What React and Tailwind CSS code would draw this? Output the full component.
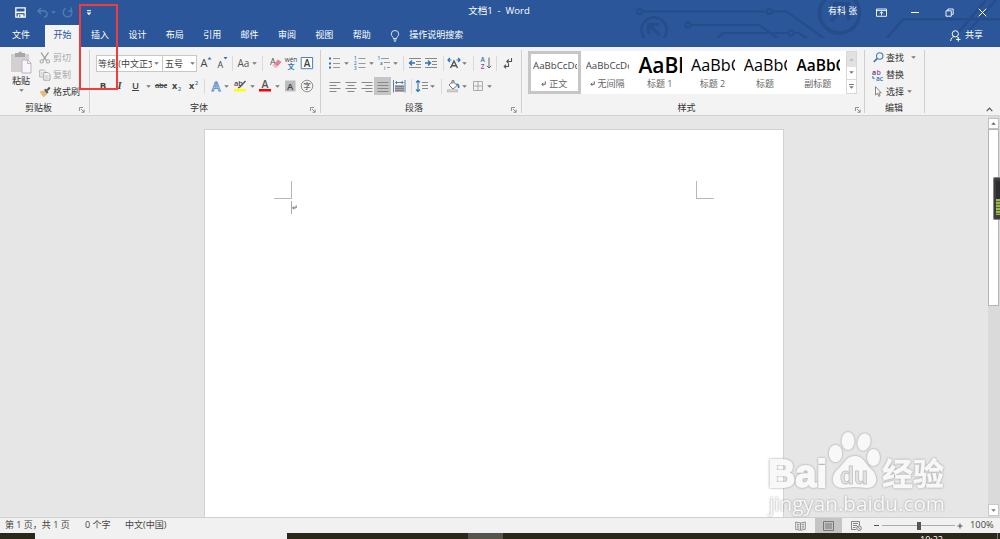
import React from 'react';

const tabs = ['插入', '设计', '布局', '引用', '邮件', '审阅', '视图', '帮助'];

const styleCards = [
    { name: '无间隔', mark: true, sample: 'AaBbCcDc', look: 'text-[9.7px] text-[#444]' },
    { name: '标题 1', sample: 'AaBb', look: 'text-[21px] font-semibold text-black' },
    { name: '标题 2', sample: 'AaBbC', look: 'text-[16.2px] text-black' },
    { name: '标题', sample: 'AaBbC', look: 'text-[16.2px] text-black' },
    { name: '副标题', sample: 'AaBbC', look: 'text-[15.5px] font-semibold text-black' },
];

/* Centers one tool in its slot of the ribbon row */
const Slot = ({ className, children }) => (
    <div className={`flex h-full shrink-0 items-center justify-center whitespace-nowrap ${className}`}>{children}</div>
);

const Caret = ({ className = 'text-[#777]' }) => (
    <svg className={`h-[3px] w-[5px] shrink-0 ${className}`} viewBox="0 0 5 3">
        <path d="M0.2 0.2h4.6L2.5 2.8z" fill="currentColor" />
    </svg>
);

const Sep = () => <span className="h-[15px] w-px shrink-0 bg-[#dadada]" />;

const Icon = ({ children, className = 'h-[14px] w-[14px]', box = '0 0 14 14' }) => (
    <svg className={`shrink-0 overflow-visible ${className}`} viewBox={box} fill="none">
        {children}
    </svg>
);

const Launcher = () => (
    <Icon className="h-[6px] w-[6px]" box="0 0 6 6">
        <path d="M0.5 4V0.5H4M2 2l3 3M5.2 2.6v2.7H2.5" stroke="#777" strokeWidth="0.8" />
    </Icon>
);

/* Group caption with the optional dialog launcher in its right corner */
const Caption = ({ children, launcher = true }) => (
    <div className="grid h-[12px] grid-cols-[1fr_10px] items-center">
        <span className="text-center leading-none text-[#333]">{children}</span>
        <span className="pt-[5px]">{launcher && <Launcher />}</span>
    </div>
);

const Lines = ({ d }) => (
    <Icon>
        <path d={d} stroke="#888" strokeWidth="1" />
    </Icon>
);

const TitleBar = () => (
    <div className="relative flex h-[25px] items-center text-white">
        <div className="flex w-[399px] items-center pl-[15px]">
            <Icon className="h-[11px] w-[11px]" box="0 0 11 11">
                <path d="M0.8 0.8h9.4v9.4H0.8z" stroke="#fff" strokeWidth="1.3" />
                <path d="M1 5.3h9" stroke="#fff" strokeWidth="1.6" />
                <path d="M2.7 7.3h5.8V10H2.7z" fill="#fff" />
                <path d="M4 8.2h1.4v1.6H4z" fill="#2b579a" />
            </Icon>
            <Icon className="ml-[11px] h-[11px] w-[11px]" box="0 0 11 11">
                <path d="M4 1L1 4l3 3M1 4h5.5c5 0 4.5 6 0.5 6" stroke="#557bb5" strokeWidth="1.4" />
            </Icon>
            <Caret className="ml-[3px] text-[#557bb5]" />
            <Icon className="ml-[6px] h-[11px] w-[11px]" box="0 0 11 11">
                <path d="M3.8 1.4A4.4 4.4 0 1 0 8.6 2.3M6 4.2h3.3V0.6" stroke="#557bb5" strokeWidth="1.3" />
            </Icon>
            <Icon className="ml-[13px] h-[6px] w-[6px]" box="0 0 6 6">
                <path d="M1 0.7h4" stroke="#fff" strokeWidth="1" />
                <path d="M0.6 2.4h4.8L3 5.2z" fill="#fff" />
            </Icon>
        </div>
        <div className="w-[200px] pb-[4px] text-center text-[9.5px] leading-none">文档1&nbsp; -&nbsp; Word</div>
        <div className="flex flex-1 items-center pl-[229px]">
            <span className="w-[48px] pb-[4px] leading-none">有科 张</span>
            <Icon className="h-[9px] w-[11px]" box="0 0 11 9">
                <path d="M0.5 1h10v7.3H0.5zM0.5 2.6h10M5.5 7.5V4M3.7 5.5l1.8-1.7 1.8 1.7" stroke="#fff" strokeWidth="0.9" />
            </Icon>
            <span className="ml-[24px] h-px w-[8px] bg-white" />
            <Icon className="ml-[26px] h-[9px] w-[9px]" box="0 0 9 9">
                <path d="M1 2.8h5.3v5.4H1zM2.8 2.8V1h5.4v5.3H6.4" stroke="#fff" strokeWidth="0.9" />
            </Icon>
            <Icon className="ml-[24px] h-[9px] w-[9px]" box="0 0 9 9">
                <path d="M0.7 0.7l7.6 7.6M8.3 0.7L0.7 8.3" stroke="#fff" strokeWidth="1" />
            </Icon>
        </div>
    </div>
);

const TabBar = () => (
    <div className="relative flex h-[22px] items-center text-white">
        <span className="w-[45px] pb-[3px] pl-[12px] leading-none">文件</span>
        <span className="flex h-full w-[35px] items-center justify-center bg-[#f3f3f3] pb-[2px] text-[#2b579a]">开始</span>
        {tabs.map((tab) => (
            <span key={tab} className="w-[37.4px] pb-[3px] pl-[11px] leading-none">{tab}</span>
        ))}
        <Icon className="ml-[11px] h-[12px] w-[10px]" box="0 0 11 13">
            <path d="M3.7 9.3C3.7 7.2 1.4 6.7 1.4 4.5a4.1 4.1 0 0 1 8.2 0C9.6 6.7 7.3 7.2 7.3 9.3zM3.8 10.8h3.4M4.4 12.2h2.2" stroke="#fff" strokeWidth="0.9" />
        </Icon>
        <span className="ml-[9px] pb-[3px] leading-none">操作说明搜索</span>
        <Icon className="mr-[4px] ml-auto h-[12px] w-[11px]" box="0 0 11 12">
            <circle cx="5.3" cy="3.8" r="3.1" stroke="#fff" strokeWidth="1" />
            <path d="M0.7 11c0.2-2.6 1.4-4 3.2-4.4M6.6 6.7l1 0.8M8.3 7.2v4.4M6.1 9.4h4.4" stroke="#fff" strokeWidth="1" />
        </Icon>
        <span className="mr-[17px] pb-[3px] leading-none">共享</span>
    </div>
);

/* Circuit-board theme art behind the title bar */
const Circuit = () => (
    <svg className="absolute top-0 left-[620px] h-[38px] w-[380px]" viewBox="0 0 380 38" fill="none" stroke="#264d8a" strokeWidth="2.2">
        <circle cx="19.5" cy="11.5" r="2.6" />
        <circle cx="149.5" cy="11.5" r="2.6" />
        <path d="M22 11.5h125M152 11.5h15l37 27" />
        <circle cx="68" cy="25" r="2.6" />
        <path d="M71 25h68.5l18 13.5" />
        <path d="M97 38l6-5h65M174 33h5l8 5.5" />
        <circle cx="171" cy="33" r="2.6" />
        <path d="M24.5 38A12.6 12.6 0 1 1 43.8 38" strokeWidth="2.7" />
        <path d="M28.5 34V24.500h10.500M29 25L39.5 35" strokeWidth="3.3" />
        <circle cx="219.5" cy="13" r="20" strokeWidth="3.6" />
        <path d="M213 4h15.500v16M228 4.500L211 21" strokeWidth="3.8" />
        <path d="M267 38l16-18.700h97M366 0l-30 35M376 0l-31 35" strokeWidth="2.500" />
    </svg>
);

const ClipboardGroup = () => (
    <div className="flex w-[89px] shrink-0 flex-col pt-[2px]">
        <div className="flex h-[52px]">
            <div className="flex w-[36px] flex-col items-center pl-[6px]">
                <Icon className="mt-[1px] h-[24px] w-[22px]" box="0 0 22 24">
                    <path d="M1 4h18v18H1z" fill="#d3cfd3" />
                    <path d="M5 3h3.500a1.800 1.800 0 0 1 3.500 0H15v4H5z" fill="#aaa7aa" />
                    <path d="M12 10h6l3 3v10h-9z" fill="#f8f5fa" stroke="#bbb6bd" />
                    <path d="M17.500 10v3.500H21" stroke="#bbb6bd" />
                </Icon>
                <span className="mt-[2px] leading-none text-[#333]">粘贴</span>
                <span className="mt-[4px]"><Caret /></span>
            </div>
            <div className="flex flex-col pl-[3px] text-[#aaa]">
                <div className="flex h-[17px] items-center">
                    <Icon className="h-[12px] w-[12px]" box="0 0 12 12">
                        <path d="M2 0.500l5.500 8M9.500 0.500L4 8.500" stroke="#999" strokeWidth="1.300" />
                        <circle cx="2.700" cy="9.400" r="1.600" stroke="#aaa" strokeWidth="1.100" />
                        <circle cx="9" cy="9.400" r="1.600" stroke="#aaa" strokeWidth="1.100" />
                    </Icon>
                    <span className="ml-[2px] leading-none">剪切</span>
                </div>
                <div className="flex h-[17px] items-center">
                    <Icon className="h-[12px] w-[12px]" box="0 0 12 12">
                        <path d="M0.700 1h4l1.500 1.500V8H0.700z" stroke="#b5b5b5" />
                        <path d="M4.700 3.500h4.300l2 2v5.700H4.700z" fill="#f3f3f3" stroke="#aaa" />
                        <path d="M6 7h3.500M6 9h3.500M2 4h1.500M2 6h1.500" stroke="#b5b5b5" strokeWidth="0.800" />
                    </Icon>
                    <span className="ml-[2px] leading-none">复制</span>
                </div>
                <div className="flex h-[17px] items-center">
                    <Icon className="h-[12px] w-[12px]" box="0 0 12 12">
                        <path d="M0.500 5.500L5 4.500l3 4-3.500 2.800z" fill="#eab676" />
                        <path d="M5 3.800l1.700-1 2.800 3.800-1.700 1.200z" fill="#555" />
                        <path d="M8 4.500l2.800-3" stroke="#555" strokeWidth="2" />
                    </Icon>
                    <span className="ml-[2px] leading-none text-[#333]">格式刷</span>
                </div>
            </div>
        </div>
        <div className="-ml-[2px]"><Caption>剪贴板</Caption></div>
    </div>
);

const FontGroup = () => (
    <div className="flex w-[230px] shrink-0 flex-col pt-[7px]">
        <div className="flex h-[18px] items-center pl-[6px] text-[#444]">
            <div className="flex h-[17px] w-[67px] shrink-0 items-center border border-[#c8c8c8] bg-white">
                <span className="w-[55px] overflow-hidden pl-[1px] leading-[13px] whitespace-nowrap">等线 (中文正文</span>
                <span className="ml-[2px]"><Caret /></span>
            </div>
            <div className="-ml-px flex h-[17px] w-[35px] shrink-0 items-center border border-[#c8c8c8] bg-white pl-[2px]">
                <span className="w-[25px] leading-none">五号</span>
                <Caret />
            </div>
            <Slot className="w-[18px]">
                <Icon>
                    <text x="1.500" y="11" fontSize="11" fill="#444">A</text>
                    <path d="M8.500 3.500l2-2.500 2 2.500z" fill="#2b72b8" />
                </Icon>
            </Slot>
            <Slot className="w-[14px]">
                <Icon>
                    <text x="2.500" y="11.500" fontSize="9" fill="#444">A</text>
                    <path d="M8.500 1h4l-2 2.500z" fill="#2b72b8" />
                </Icon>
            </Slot>
            <Slot className="w-[6px]"><Sep /></Slot>
            <Slot className="w-[17px] text-[10px] text-[#555]">Aa</Slot>
            <Slot className="w-[4px]"><Caret /></Slot>
            <Slot className="w-[13px]"><Sep /></Slot>
            <Slot className="w-[13px]">
                <Icon>
                    <text x="1" y="9" fontSize="9" fill="#555">A</text>
                    <path d="M3.500 9.500l5.500-6 3.500 2.500-5.500 6z" fill="#e58094" />
                    <path d="M3.500 9.500l1.500-1.700 3.500 2.600-1.500 1.700z" fill="#f3c0ca" />
                </Icon>
            </Slot>
            <Slot className="w-[18px]">
                <Icon>
                    <text x="7" y="5.500" fontSize="6.500" fill="#444" textAnchor="middle">wén</text>
                    <text x="7" y="12.500" fontSize="7" fontWeight="600" fill="#2b72b8" textAnchor="middle">文</text>
                </Icon>
            </Slot>
            <Slot className="w-[14px]">
                <Icon>
                    <path d="M1.200 1.500h11.400v11.200H1.200z" fill="#fff" stroke="#4c82b8" />
                    <text x="7" y="11" fontSize="10" fontWeight="600" fill="#444" textAnchor="middle">A</text>
                </Icon>
            </Slot>
        </div>
        <div className="mt-[5px] flex h-[18px] items-center pl-[6px] text-[#444]">
            <Slot className="w-[14px] text-[9.500px] font-bold">B</Slot>
            <Slot className="w-[19px] font-['Liberation_Serif',serif] text-[10.500px] font-bold italic">I</Slot>
            <Slot className="w-[13px] text-[9.500px] font-semibold underline underline-offset-1">U</Slot>
            <Slot className="w-[12px]"><Caret /></Slot>
            <Slot className="w-[14px] text-[7.500px] font-semibold tracking-tight line-through">abc</Slot>
            <Slot className="w-[18px]">
                <Icon>
                    <text x="2" y="10" fontSize="9" fontWeight="700" fill="#444">x</text>
                    <text x="8" y="12" fontSize="5.500" fontWeight="600" fill="#2b72b8">2</text>
                </Icon>
            </Slot>
            <Slot className="w-[15px]">
                <Icon>
                    <text x="2" y="10" fontSize="9" fontWeight="700" fill="#444">x</text>
                    <text x="8" y="6" fontSize="5.500" fontWeight="600" fill="#2b72b8">2</text>
                </Icon>
            </Slot>
            <Slot className="w-[6px]"><Sep /></Slot>
            <Slot className="w-[17px]">
                <Icon>
                    <text x="7" y="11.500" fontSize="13" fontWeight="600" fill="#fff" stroke="#4c86c6" strokeWidth="0.800" textAnchor="middle">A</text>
                </Icon>
            </Slot>
            <Slot className="w-[5px]"><Caret /></Slot>
            <Slot className="w-[22px]">
                <Icon>
                    <text x="1" y="7" fontSize="7.500" fontWeight="600" fill="#444">ab</text>
                    <path d="M12.500 2L7 8l-2 0.800" stroke="#555" strokeWidth="1.400" />
                    <path d="M1 10h12v2.500H1z" fill="#ffff00" />
                </Icon>
            </Slot>
            <Slot className="w-[3px]"><Caret /></Slot>
            <Slot className="w-[22px]">
                <Icon>
                    <text x="7" y="9" fontSize="10.500" fontWeight="600" fill="#555" textAnchor="middle">A</text>
                    <path d="M1 10h12v2.500H1z" fill="#ff0000" />
                </Icon>
            </Slot>
            <Slot className="w-[3px]"><Caret /></Slot>
            <Slot className="w-[22px]">
                <Icon>
                    <path d="M2 1.500h10.500v11H2z" fill="#bdbdbd" />
                    <text x="7.200" y="10.500" fontSize="9.500" fontWeight="600" fill="#444" textAnchor="middle">A</text>
                </Icon>
            </Slot>
            <Slot className="w-[11px]">
                <Icon>
                    <circle cx="7" cy="7" r="5.800" stroke="#777" strokeWidth="0.800" />
                    <text x="7" y="9.700" fontSize="7.500" fill="#333" textAnchor="middle">字</text>
                </Icon>
            </Slot>
        </div>
        <div className="mt-[6px] -ml-[2px]"><Caption>字体</Caption></div>
    </div>
);

const ParagraphGroup = () => (
    <div className="flex w-[200px] shrink-0 flex-col pt-[7px]">
        <div className="flex h-[18px] items-center pl-[7px]">
            <Slot className="w-[13px]">
                <Icon>
                    <path d="M5 2.500h7M5 7.500h7M5 11.500h7" stroke="#999" />
                    <path d="M1 1.500h2v2H1zM1 6.500h2v2H1zM1 10.500h2v2H1z" fill="#2b72b8" />
                </Icon>
            </Slot>
            <Slot className="w-[11px]"><Caret /></Slot>
            <Slot className="w-[15px]">
                <Icon>
                    <path d="M5.500 2.500h7M5.500 7.500h7M5.500 11.500h7" stroke="#999" />
                    <text x="1" y="4.300" fontSize="4.500" fontWeight="600" fill="#2b72b8">1</text>
                    <text x="1" y="9" fontSize="4.500" fontWeight="600" fill="#2b72b8">2</text>
                    <text x="1" y="13.500" fontSize="4.500" fontWeight="600" fill="#2b72b8">3</text>
                </Icon>
            </Slot>
            <Slot className="w-[8px]"><Caret /></Slot>
            <Slot className="w-[18px]">
                <Icon>
                    <path d="M4 2.500h8M7 6.500h6M10 11.500h3" stroke="#999" />
                    <text x="0.500" y="4.300" fontSize="4.500" fontWeight="600" fill="#2b72b8">1</text>
                    <text x="3" y="9" fontSize="4.500" fontWeight="600" fill="#2b72b8">a</text>
                    <text x="7" y="13.500" fontSize="4.500" fontWeight="600" fill="#2b72b8">i</text>
                </Icon>
            </Slot>
            <Slot className="w-[5px]"><Caret /></Slot>
            <Slot className="w-[11px]"><Sep /></Slot>
            <Slot className="w-[12px]">
                <Icon>
                    <path d="M1 2.500h12M8 5.500h5M8 8.500h5M1 11.500h12" stroke="#888" />
                    <path d="M1.500 7H7M4 4.500L1.500 7 4 9.500" stroke="#2b72b8" strokeWidth="1.400" />
                </Icon>
            </Slot>
            <Slot className="w-[20px]">
                <Icon>
                    <path d="M1 2.500h12M8 5.500h5M8 8.500h5M1 11.500h12" stroke="#888" />
                    <path d="M1 7h5.500M4 4.500L6.500 7 4 9.500" stroke="#2b72b8" strokeWidth="1.400" />
                </Icon>
            </Slot>
            <Slot className="w-[5px]"><Sep /></Slot>
            <Slot className="w-[16px]">
                <Icon>
                    <path d="M3.500 12L7 5l3.500 7M4.800 9.800h4.400" stroke="#555" strokeWidth="1.400" />
                    <path d="M1 4h3.500M2.800 2L1 4l1.800 2M9.500 4H13M11.200 2L13 4l-1.800 2" stroke="#2b72b8" strokeWidth="1.200" />
                </Icon>
            </Slot>
            <Slot className="w-[5px]"><Caret /></Slot>
            <Slot className="w-[13px]"><Sep /></Slot>
            <Slot className="w-[11px]">
                <Icon>
                    <text x="1.500" y="6" fontSize="6.500" fontWeight="600" fill="#2b72b8">A</text>
                    <text x="1.700" y="13" fontSize="6.500" fontWeight="600" fill="#8a4aa8">Z</text>
                    <path d="M10 1.500v10.500M7.800 9.800L10 12l2.200-2.200" stroke="#666" />
                </Icon>
            </Slot>
            <Slot className="w-[10px]"><Sep /></Slot>
            <Slot className="w-[14px]">
                <Icon>
                    <path d="M10.500 2v3.500H6M7.800 3.500L5.800 5.500l2 2M7.500 8v2.500H3.500M5 8.700l-1.800 1.800L5 12.300" stroke="#555" strokeWidth="1.100" />
                </Icon>
            </Slot>
        </div>
        <div className="mt-[5px] flex h-[18px] items-center pl-[7px]">
            <Slot className="w-[13px]"><Lines d="M1.500 3.500h11M1.500 6.500h7M1.500 9.500h11M1.500 12.500h7" /></Slot>
            <Slot className="w-[19px]"><Lines d="M1.500 3.500h11M3.500 6.500h7M1.500 9.500h11M3.500 12.500h7" /></Slot>
            <Slot className="w-[14px]"><Lines d="M1.500 3.500h11M5.500 6.500h7M1.500 9.500h11M5.500 12.500h7" /></Slot>
            <Slot className="w-[17px] bg-[#c5c5c5]"><Lines d="M1.500 3.500h11M1.500 6.500h11M1.500 9.500h11M1.500 12.500h11" /></Slot>
            <Slot className="w-[16px]">
                <Icon>
                    <path d="M3 6h9v7H3z" fill="#aaa" />
                    <path d="M3 7.500h9M3 9.500h9M3 11.500h9" stroke="#777" strokeWidth="0.800" />
                    <path d="M1.500 1v12.500M13 1v12.500M3.500 3.500H11M5 2L3.500 3.500 5 5M9.700 2l1.500 1.500L9.700 5" stroke="#4c82b8" />
                </Icon>
            </Slot>
            <Slot className="w-[8px]"><Sep /></Slot>
            <Slot className="w-[13px]">
                <Icon>
                    <path d="M7 3.500h6M7 6.500h6M7 9.500h6" stroke="#888" />
                    <path d="M3 1.500v11M1 3.500l2-2 2 2M1 10.500l2 2 2-2" stroke="#2b72b8" strokeWidth="1.100" />
                </Icon>
            </Slot>
            <Slot className="w-[9px]"><Caret /></Slot>
            <Slot className="w-[8px]"><Sep /></Slot>
            <Slot className="w-[16px]">
                <Icon>
                    <path d="M3 6l4-3.500 4.200 4L7 10z" fill="#fff" stroke="#777" />
                    <path d="M6 5V1.500h2v3" stroke="#777" strokeWidth="0.800" />
                    <path d="M10.500 5c2 0.500 2.500 2 2 4" stroke="#2b72b8" strokeWidth="1.600" />
                    <path d="M1.500 10.800h10v2h-10z" fill="#ddd" stroke="#999" strokeWidth="0.600" />
                </Icon>
            </Slot>
            <Slot className="w-[7px]"><Caret /></Slot>
            <Slot className="w-[19px]">
                <Icon>
                    <path d="M2.500 2.500h9v9h-9zM7 2.500v9M2.500 7h9" stroke="#aaa" />
                </Icon>
            </Slot>
            <Slot className="w-[5px]"><Caret /></Slot>
        </div>
        <div className="mt-[6px] -ml-[4px]"><Caption>段落</Caption></div>
    </div>
);

const StyleCard = ({ card, selected }) => (
    <div className={`flex w-[52.700px] shrink-0 flex-col ${selected ? 'border-[3px] border-[#c6c6c6] px-[2px]' : 'px-[5px] py-[3px]'}`}>
        <div className={`flex h-[23px] w-[43.500px] items-center overflow-hidden leading-none whitespace-nowrap ${card.look}`}>
            {card.sample}
        </div>
        <div className="flex h-[13px] items-center justify-center gap-[3px] leading-none whitespace-nowrap text-[#666]">
            {card.mark && (
                <Icon className="h-[5px] w-[5px]" box="0 0 5 5">
                    <path d="M4.300 0.300v3H1M2.300 1.800L0.800 3.300l1.500 1.500" stroke="#555" strokeWidth="0.900" />
                </Icon>
            )}
            <span>{card.name}</span>
        </div>
    </div>
);

const StylesGroup = () => (
    <div className="flex w-[342px] shrink-0 flex-col pt-[4px]">
        <div className="ml-[6px] flex h-[43px] w-[329px] bg-white">
            <StyleCard selected card={{ name: '正文', mark: true, sample: 'AaBbCcDc', look: 'text-[9.700px] text-[#444]' }} />
            {styleCards.map((card) => (
                <StyleCard key={card.name} card={card} />
            ))}
            <div className="ml-auto flex w-[11px] shrink-0 flex-col border border-[#d8d8d8]">
                <span className="flex h-[15px] items-center justify-center bg-[#e1e1e1]"><Caret className="rotate-180 text-[#bbb]" /></span>
                <span className="flex h-[14px] items-center justify-center border-b border-[#d8d8d8]"><Caret /></span>
                <span className="flex h-[13px] flex-col items-center justify-center gap-[1px]">
                    <span className="h-px w-[5px] bg-[#777]" />
                    <Caret />
                </span>
            </div>
        </div>
        <div className="mt-[7px] -mr-px ml-[-4px]"><Caption>样式</Caption></div>
    </div>
);

const EditGroup = () => (
    <div className="flex w-[59px] shrink-0 flex-col pt-[2px] text-[#333]">
        <div className="flex h-[17px] items-center pl-[8px]">
            <Icon className="h-[11px] w-[11px]" box="0 0 11 11">
                <circle cx="6.700" cy="4" r="3.200" stroke="#3f78b5" strokeWidth="1.100" />
                <path d="M4.300 6.300L0.800 10" stroke="#3f78b5" strokeWidth="1.700" />
            </Icon>
            <span className="ml-[2px] w-[25px] leading-none">查找</span>
            <Caret />
        </div>
        <div className="flex h-[17px] items-center pl-[7px]">
            <Icon className="h-[12px] w-[12px]" box="0 0 12 12">
                <text x="0" y="5.500" fontSize="7" fontWeight="600" fill="#444">a</text>
                <text x="4.500" y="5.500" fontSize="7" fontWeight="600" fill="#8a4aa8">b</text>
                <text x="4" y="12" fontSize="6.500" fontWeight="600" fill="#2b72b8">ac</text>
                <path d="M0.800 7v2.300h2" stroke="#2b72b8" strokeWidth="0.900" />
            </Icon>
            <span className="ml-[2px] leading-none">替换</span>
        </div>
        <div className="flex h-[17px] items-center pl-[8px]">
            <Icon className="h-[11px] w-[11px]" box="0 0 11 11">
                <path d="M2.500 0.700v8.300l2-1.700 1.300 3 1.300-0.600-1.300-2.800H8.200z" fill="#fff" stroke="#666" strokeWidth="0.800" />
            </Icon>
            <span className="ml-[2px] w-[21px] leading-none">选择</span>
            <Caret />
        </div>
        <div className="mt-[1px] ml-[9px]"><Caption launcher={false}>编辑</Caption></div>
    </div>
);

const GroupLine = () => <span className="mt-[3px] h-[63px] w-px shrink-0 bg-[#cfcfcf]" />;

const Ribbon = () => (
    <div className="flex h-[69px] border-b border-[#d2d2d2] bg-[#f3f3f3]">
        <ClipboardGroup />
        <GroupLine />
        <FontGroup />
        <GroupLine />
        <ParagraphGroup />
        <GroupLine />
        <StylesGroup />
        <GroupLine />
        <EditGroup />
        <GroupLine />
        <div className="flex flex-1 items-end justify-end pr-[7px] pb-[3px]">
            <Icon className="h-[5px] w-[7px]" box="0 0 7 5">
                <path d="M0.700 4.200l2.800-3 2.800 3" stroke="#555" strokeWidth="1.200" />
            </Icon>
        </div>
    </div>
);

/* Baidu Jingyan stamp in the lower right of the document area */
const Watermark = () => (
    <svg className="absolute top-[428px] left-[760px] h-[92px] w-[192px] drop-shadow-[0_0_1px_#999]" viewBox="0 0 192 92" fill="#f8f8f8">
        <text x="8" y="58.500" fontSize="39" fontWeight="700" textLength="59" lengthAdjust="spacingAndGlyphs" stroke="#f8f8f8" strokeWidth="1.800" className="font-['Liberation_Sans',sans-serif]">Bai</text>
        <ellipse cx="75.500" cy="25.500" rx="6.700" ry="8.800" />
        <ellipse cx="88" cy="13" rx="6.500" ry="9" />
        <ellipse cx="104" cy="14" rx="6.500" ry="8.800" transform="rotate(12 104 14)" />
        <ellipse cx="113.500" cy="29.500" rx="6.500" ry="8.500" />
        <path d="M95 28c9 0 10 8 16 13 8 7 7 19-4 19-5 0-7-1-12-1s-8 1-12 1c-12 0-13-12-5-19 6-5 8-13 17-13z" />
        <text x="80" y="56" fontSize="24" fontWeight="700" fill="#e3e3e3" stroke="#c6c6c6" strokeWidth="1" textLength="28" lengthAdjust="spacingAndGlyphs" className="font-['Liberation_Sans',sans-serif]">du</text>
        <text x="122" y="57" fontSize="31" fontWeight="700" textLength="62" lengthAdjust="spacingAndGlyphs" stroke="#f8f8f8" strokeWidth="0.500">经验</text>
        <text x="9" y="83" fontSize="20" textLength="176" lengthAdjust="spacingAndGlyphs">jingyan.baidu.com</text>
    </svg>
);

const ScrollBar = () => (
    <div className="flex w-[12px] flex-col bg-[#dadada] pt-[2px] pr-px pb-px">
        <span className="flex h-[11px] items-center justify-center border border-[#c0c0c0] bg-white"><Caret className="rotate-180 text-[#666]" /></span>
        <span className="h-[177px] border border-[#b5b5b5] bg-white" />
        <span className="mt-auto flex h-[12px] items-center justify-center border border-[#c8c8c8] bg-white"><Caret /></span>
    </div>
);

const Workspace = () => (
    <div className="flex h-[401px] bg-[#e6e6e6]">
        <div className="flex flex-1 pt-[13px] pl-[204px]">
            <div className="flex h-[388px] w-[580px] justify-between border border-b-0 border-[#d2d2d2] bg-white px-[69px] pt-[51px]">
                <div className="flex flex-col">
                    <span className="h-[18px] w-[18px] border-r border-b border-[#b8b8b8]" />
                    <span className="mt-[2px] ml-[17px] flex h-[13px] items-center border-l border-[#aaa]">
                        <Icon className="h-[5px] w-[5px]" box="0 0 6 6">
                            <path d="M5 0.500v3H1M2.500 1.700L0.700 3.500l1.800 1.800" stroke="#555" strokeWidth="1" />
                        </Icon>
                    </span>
                </div>
                <span className="h-[18px] w-[18px] border-b border-l border-[#b8b8b8]" />
            </div>
        </div>
        <ScrollBar />
    </div>
);

const StatusBar = () => (
    <div className="flex h-[16px] items-center border-t border-[#d0d0d0] bg-[#f1f1f1] text-[#444]">
        <span className="w-[80px] pb-[2px] pl-[5px] leading-none whitespace-nowrap">第 1 页，共 1 页</span>
        <span className="w-[45px] pb-[2px] pl-[5px] leading-none">0 个字</span>
        <span className="pb-[2px] leading-none">中文(中国)</span>
        <Icon className="mr-[9px] ml-auto h-[10px] w-[11px]" box="0 0 11 10">
            <path d="M5.500 2L0.700 1v7.300l4.800 1 4.800-1V1zM5.500 2v7M2 3.200l2.300 0.400M2 5l2.300 0.400M2 6.800l2.300 0.400M9 3.200l-2.300 0.400M9 5l-2.300 0.400M9 6.800l-2.300 0.400" stroke="#777" strokeWidth="0.800" />
        </Icon>
        <span className="flex h-[15px] w-[27px] items-center justify-center bg-[#c5c5c5]">
            <Icon className="h-[10px] w-[11px]" box="0 0 11 10">
                <path d="M0.500 0.500h10v9h-10zM2 3h7M2 5h7M2 7h7" stroke="#777" />
            </Icon>
        </span>
        <Icon className="ml-[9px] h-[10px] w-[11px]" box="0 0 11 10">
            <path d="M5 8.500H0.500v-8h8v4M2 2.500h5M2 4.500h4M2 6.500h2.500" stroke="#777" strokeWidth="0.900" />
            <circle cx="8" cy="7.200" r="2.300" fill="#eee" stroke="#777" strokeWidth="0.900" />
            <path d="M6.500 5.700l3 3" stroke="#777" strokeWidth="0.800" />
        </Icon>
        <span className="ml-[12px] h-[1.500px] w-[5px] bg-[#555]" />
        <span className="ml-[3px] flex h-[9px] w-[73px] items-center">
            <span className="h-px w-[35px] bg-[#aaa]" />
            <span className="h-[8px] w-[4px] bg-[#555]" />
            <span className="h-px flex-1 bg-[#aaa]" />
        </span>
        <Icon className="ml-[2px] h-[6px] w-[6px]" box="0 0 6 6">
            <path d="M0.500 3h5M3 0.500v5" stroke="#555" strokeWidth="1.100" />
        </Icon>
        <span className="ml-[7px] w-[30px] pb-[2px] text-[9.300px] leading-none">100%</span>
    </div>
);

const Taskbar = () => (
    <div className="flex h-[6px] overflow-hidden bg-[#2b2719] text-white">
        <span className="ml-[35px] w-[252px] bg-[#f1f1f1]" />
        <span className="ml-[181px] w-[35px] bg-[#57544a]" />
        <span className="mt-[2px] ml-auto w-[77px] text-[9px] leading-[10px]">10:22</span>
        <span className="mr-[2px] w-px bg-[#77746a]" />
    </div>
);

export default function App() {
    return (
        <div className="relative h-[539px] w-[1000px] overflow-hidden font-['Open_Sans','Noto_Sans_CJK_SC',sans-serif] text-[9px]">
            <div className="relative bg-[#2b579a]">
                <Circuit />
                <TitleBar />
                <TabBar />
            </div>
            <Ribbon />
            <Workspace />
            <StatusBar />
            <Taskbar />
            <Watermark />
            {/* Desktop meter docked on the right edge */}
            <div className="absolute top-[177px] right-0 flex h-[43px] w-[7px] flex-col justify-end rounded-l-[2px] border border-r-0 border-[#8a8580] bg-[#3c3e42] pb-[4px] pl-[2px]">
                <span className="h-[18px] w-[4px] bg-[#2c2e31]" />
                <span className="h-[16px] w-[4px] bg-[repeating-linear-gradient(#9db84e_0_2px,#5c6c37_2px_3px)]" />
            </div>
            {/* Callout around the insert tab */}
            <div className="absolute top-[4px] left-[79px] h-[86px] w-[39px] border-2 border-[#f23b3b]" />
        </div>
    );
}
